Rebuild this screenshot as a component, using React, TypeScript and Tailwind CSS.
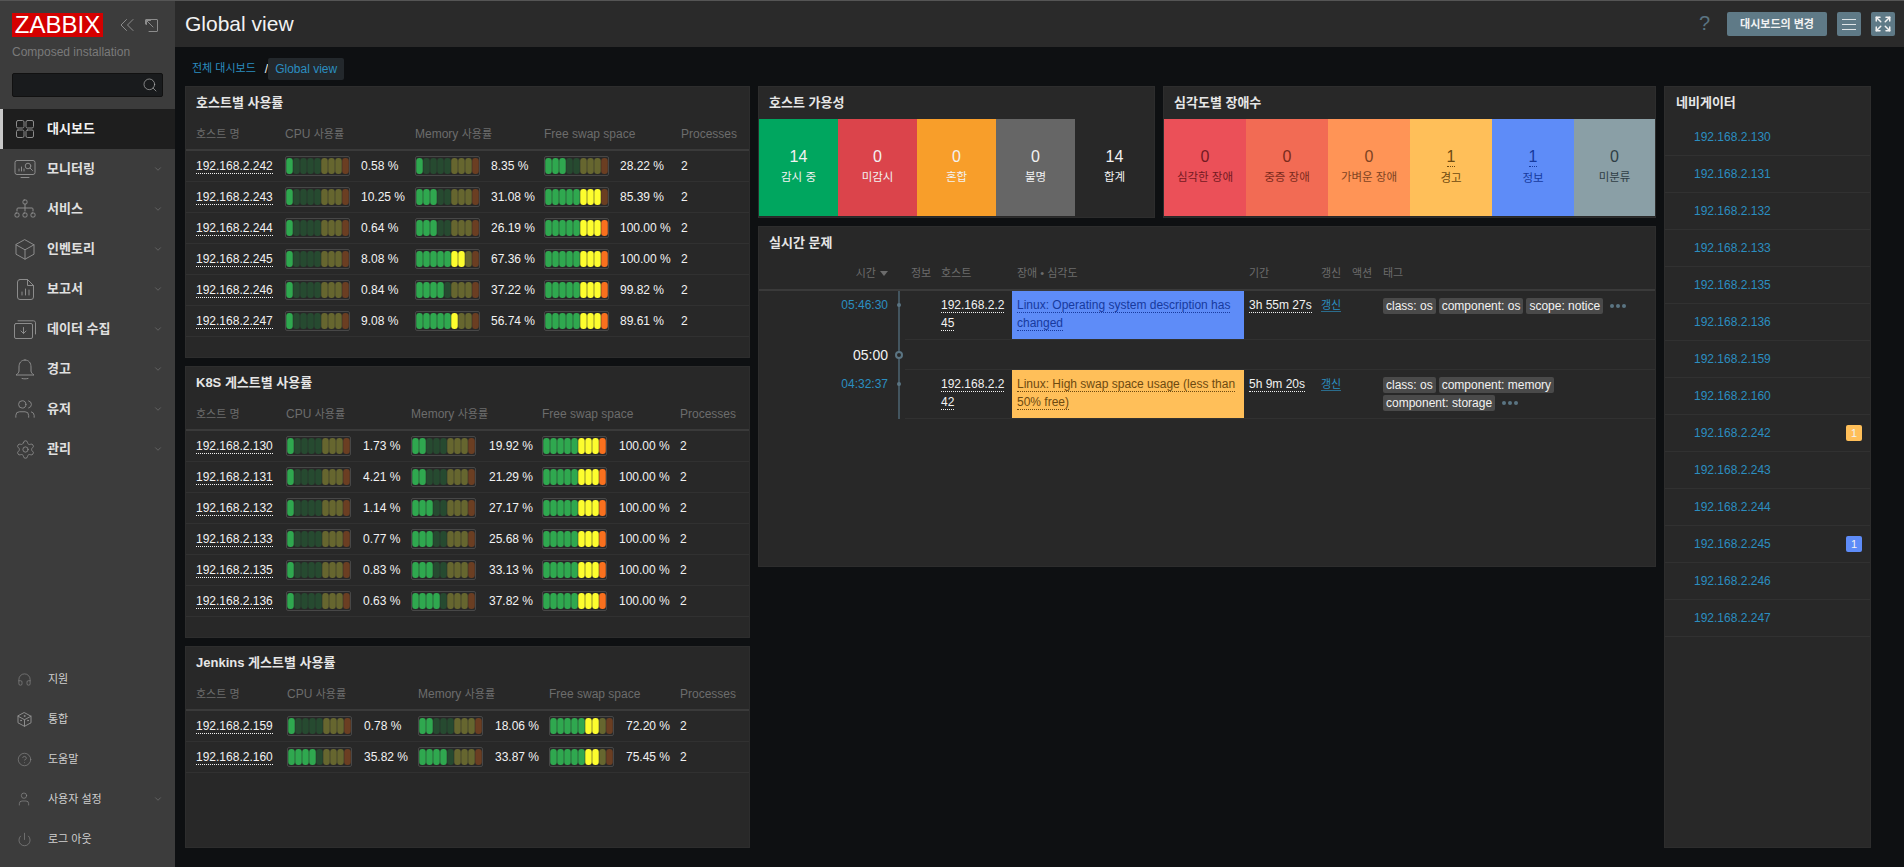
import React from "react";
import { Search, ChevronDown, Users, Settings, Headphones, CircleHelp, User, Power, Expand } from "lucide-react";

const ICON = { fill: "none", stroke: "#8c8c8c", strokeWidth: 1, strokeLinecap: "round" as const, strokeLinejoin: "round" as const };

const DashIcon = () => (
  <svg width="18" height="18" viewBox="0 0 18 18" {...ICON}>
    <rect x="0.5" y="0.5" width="7.5" height="7.5" rx="1.5" /><rect x="10" y="0.5" width="7.5" height="7.5" rx="1.5" />
    <rect x="0.5" y="10" width="7.5" height="7.5" rx="1.5" /><rect x="10" y="10" width="7.5" height="7.5" rx="1.5" />
  </svg>
);
const MonitorIcon = () => (
  <svg width="22" height="18" viewBox="0 0 22 18" {...ICON}>
    <path d="M13 .5H3a2 2 0 0 0-2 2v10a2 2 0 0 0 2 2h16a2 2 0 0 0 2-2V2.5a2 2 0 0 0-2-2h-6zM7 17.5h8M5 11V9M7.5 11V7M10 11V9" />
    <circle cx="14" cy="6" r="2.8" /><path d="M16 8l2.5 2.5" />
  </svg>
);
const ServiceIcon = () => (
  <svg width="22" height="20" viewBox="0 0 22 20" {...ICON}>
    <rect x="9" y="1" width="4" height="4" rx="1.2" /><path d="M11 5v7M3 12V10a1 1 0 0 1 1-1h14a1 1 0 0 1 1 1v2" />
    <rect x="1" y="14" width="4" height="4" rx="1.2" /><rect x="9" y="14" width="4" height="4" rx="1.2" /><rect x="17" y="14" width="4" height="4" rx="1.2" />
  </svg>
);
const BoxIcon = () => (
  <svg width="20" height="21" viewBox="0 0 20 21" {...ICON}>
    <path d="M10 .8l9 5v9.4l-9 5-9-5V5.800zM1 5.800l9 5 9-5M10 10.800v9.400" />
  </svg>
);
const ReportIcon = () => (
  <svg width="17" height="21" viewBox="0 0 17 21" {...ICON}>
    <path d="M3 .5h7.500l6 6v11.500a2.500 2.500 0 0 1-2.500 2.500H3A2.500 2.500 0 0 1 .5 18V3A2.500 2.500 0 0 1 3 .5zM10.500.5v6h6M5 16v-3M8.500 16V10M12 16v-5" />
  </svg>
);
const DataIcon = () => (
  <svg width="22" height="19" viewBox="0 0 22 19" {...ICON}>
    <path d="M4 .8h15.500a2 2 0 0 1 2 2V14" />
    <rect x=".5" y="3.500" width="18" height="15" rx="1.500" />
    <path d="M9.500 7.500v6M7 11l2.500 2.500L12 11" />
  </svg>
);
const BellIcon = () => (
  <svg width="20" height="21" viewBox="0 0 20 21" {...ICON}>
    <path d="M10 1C6 1 4 4 4 8v4c0 1.500-1.500 3-3 4h18c-1.500-1-3-2.500-3-4V8c0-4-2-7-6-7zM7 19.500c1.500.5 4.500.5 6 0" />
  </svg>
);
const CubeIcon = () => (
  <svg width="15" height="15" viewBox="0 0 15 15" {...ICON}>
    <path d="M7.500.7l6.500 3.500v6.600l-6.500 3.500L1 10.800V4.200zM1 4.200l6.500 3.500L14 4.200M7.500 7.700v6.600" />
    <circle cx="7.500" cy="4" r=".5" /><circle cx="4" cy="8.500" r=".5" /><circle cx="11" cy="8.500" r=".5" />
  </svg>
);
const PopoutIcon = () => (
  <svg width="13" height="13" viewBox="0 0 13 13" {...ICON}>
    <path d="M.5 5V1A.5.5 0 0 1 1 .5h11a.5.5 0 0 1 .5.5v11a.5.5 0 0 1-.5.5H4M1.500 1.500L8 8M1.500 5.500v-4h4" />
  </svg>
);
const DoubleLeft = () => (
  <svg width="14" height="12" viewBox="0 0 14 12" {...ICON}>
    <path d="M6.500.5L1 6l5.500 5.500M13 .5L7.500 6l5.500 5.500" />
  </svg>
);

const mainNav: [string, React.ReactNode][] = [
  ["모니터링", <MonitorIcon />],
  ["서비스", <ServiceIcon />],
  ["인벤토리", <BoxIcon />],
  ["보고서", <ReportIcon />],
  ["데이터 수집", <DataIcon />],
  ["경고", <BellIcon />],
  ["유저", <Users size={22} strokeWidth={1} color="#8c8c8c" />],
  ["관리", <Settings size={21} strokeWidth={1} color="#8c8c8c" />],
];
const bottomNav: [string, React.ReactNode, boolean][] = [
  ["지원", <Headphones size={15} strokeWidth={1} color="#8c8c8c" />, false],
  ["통합", <CubeIcon />, false],
  ["도움말", <CircleHelp size={15} strokeWidth={1} color="#8c8c8c" />, false],
  ["사용자 설정", <User size={16} strokeWidth={1} color="#8c8c8c" />, true],
  ["로그 아웃", <Power size={15} strokeWidth={1} color="#8c8c8c" />, false],
];

function Sidebar() {
  return (
    <aside className="w-[175px] shrink-0 bg-[#3c3c3c] flex flex-col justify-between">
      <div>
        <div className="flex items-center pl-[12px] pt-[12px] h-[36px]">
          <div className="w-[91px] h-[24px] bg-[#d40000] text-white text-[24px] leading-[24px] text-center">ZABBIX</div>
          <div className="ml-[17px] flex items-center"><DoubleLeft /></div>
          <div className="ml-[11px] flex items-center"><PopoutIcon /></div>
        </div>
        <div className="pl-[12px] mt-[7px] text-[12px] leading-[16px] text-[#7a7a7a]">Composed installation</div>
        <div className="mx-[12px] mt-[13px] h-[24px] w-[151px] bg-[#191b1d] border border-[#111] rounded-[2px] flex items-center justify-end pr-[4px]">
          <Search size={16} strokeWidth={1} color="#b5b5b5" />
        </div>
        <div className="mt-[12px]">
          <div className="h-[40px] flex items-center bg-[#1e1e1e] border-l-[3px] border-[#c8c8c8]">
            <div className="w-[44px] pl-[13px]"><DashIcon /></div>
            <span className="text-[13px] font-bold text-[#f2f2f2]">대시보드</span>
          </div>
          {mainNav.map(([label, icon]) => (
            <div key={label} className="h-[40px] flex items-center relative">
              <div className="w-[47px] flex justify-center pl-[3px]">{icon}</div>
              <span className="text-[13px] font-bold text-[#e0e0e0]">{label}</span>
              <div className="ml-auto mr-[12px]"><ChevronDown size={10} strokeWidth={1} color="#9a9a9a" /></div>
            </div>
          ))}
        </div>
      </div>
      <div className="pb-[8px]">
        {bottomNav.map(([label, icon, chev]) => (
          <div key={label} className="h-[40px] flex items-center">
            <div className="w-[48px] flex justify-center">{icon}</div>
            <span className="text-[11px] text-[#cfcfcf]">{label}</span>
            {chev && <div className="ml-auto mr-[12px]"><ChevronDown size={10} strokeWidth={1} color="#9a9a9a" /></div>}
          </div>
        ))}
      </div>
    </aside>
  );
}

function Gauge({ value }: { value: number }) {
  const n = Math.ceil((value / 100) * 9);
  const segs = [0, 1, 2, 3, 4, 5, 6, 7, 8];
  return (
    <div className="w-[65px] h-[20px] border border-[#474747] rounded-[2px] flex items-center">
      <svg width="63" height="16" viewBox="0 0 63 16">
        {segs.map((i) => {
          const on = i < n;
          const fill = i < 5 ? (on ? "#2fa84f" : "#264a30") : i < 8 ? (on ? "#fdfd2e" : "#66662f") : on ? "#f9701e" : "#6b3e22";
          return <rect key={i} x={i * 7 + 0.25} y="0" width="6.5" height="16" rx="3" fill={fill} />;
        })}
      </svg>
    </div>
  );
}

type Row = [string, number, number, number];

function UsagePanel({ title, rows, cols, tall }: { title: React.ReactNode; rows: Row[]; cols: string; tall: string }) {
  return (
    <section className={`bg-[#282828] border border-[#2d2d2d] ${tall}`}>
      <h2 className="h-[32px] flex items-center pl-[10px] text-[13px] font-bold text-[#e6e6e6]">{title}</h2>
      <div className={`grid ${cols} pl-[10px] h-[32px] items-center border-b-2 border-[#3a3a3a] text-[12px] text-[#6c6c6c]`}>
        <span className="text-[11px]">호스트 명</span>
        <span className="col-span-2">CPU <span className="text-[11px]">사용률</span></span>
        <span className="col-span-2">Memory <span className="text-[11px]">사용률</span></span>
        <span className="col-span-2">Free swap space</span>
        <span>Processes</span>
      </div>
      {rows.map(([host, cpu, mem, swap]) => (
        <div key={host} className={`grid ${cols} pl-[10px] h-[31px] items-center border-b border-[#313131] text-[12px] text-[#f2f2f2]`}>
          <span><span className="border-b border-dotted border-[#f2f2f2]">{host}</span></span>
          <Gauge value={cpu} />
          <span>{cpu.toFixed(2)} %</span>
          <Gauge value={mem} />
          <span>{mem.toFixed(2)} %</span>
          <Gauge value={swap} />
          <span>{swap.toFixed(2)} %</span>
          <span>2</span>
        </div>
      ))}
    </section>
  );
}

function Stat({ num, label, cls, under, lineCls, size = "flex-1" }: { num: number; label: string; cls: string; under?: boolean; lineCls?: string; size?: string }) {
  return (
    <div className={`${size} flex flex-col items-center justify-center pb-[2px] ${cls}`}>
      <span className={`text-[16px] leading-[18px] ${under ? `border-b border-dotted ${lineCls}` : ""}`}>{num}</span>
      <span className="text-[11.5px] leading-[16px] mt-[3px]">{label}</span>
    </div>
  );
}

function Tag({ children }: { children: React.ReactNode }) {
  return <span className="h-[16px] leading-[16px] px-[3px] rounded-[2px] bg-[#4a4a4a] text-[12px] text-[#f2f2f2]">{children}</span>;
}
function Dots() {
  return (
    <span className="h-[16px] flex items-center gap-[2px] ml-[4px]">
      <i className="w-[4px] h-[4px] rounded-full bg-[#5a7482]" /><i className="w-[4px] h-[4px] rounded-full bg-[#5a7482]" /><i className="w-[4px] h-[4px] rounded-full bg-[#5a7482]" />
    </span>
  );
}

function Timeline({ kind }: { kind: "dot" | "ring" }) {
  return (
    <div className="w-[12px] shrink-0 relative flex justify-center">
      <div className="w-[2px] bg-[#43555f]" />
      {kind === "dot" ? (
        <div className="absolute top-[12px] left-[4px] w-[4px] h-[4px] rounded-full bg-[#5a7482]" />
      ) : (
        <div className="absolute top-[11px] left-[2px] w-[8px] h-[8px] rounded-full border-2 border-[#5a7482] bg-[#282828]" />
      )}
    </div>
  );
}

const probCols = "grid-cols-[36px_71px_232px_77px_31px_31px_1fr]";

function ProblemRow(props: { time: string; h1: string; h2: string; text: React.ReactNode; bg: string; line: string; dur: string; tags: React.ReactNode }) {
  return (
    <div className="flex h-[49px]">
      <div className="w-[134px] shrink-0 text-right pr-[5px] pt-[5px] text-[12px] leading-[18px] text-[#2b8ec0]">{props.time}</div>
      <Timeline kind="dot" />
      <div className={`flex-1 grid ${probCols} border-b border-[#313131] text-[12px] leading-[18px] text-[#f2f2f2]`}>
        <div />
        <div className="pt-[5px]"><span className="border-b border-dotted border-[#f2f2f2]">{props.h1}<br />{props.h2}</span></div>
        <div className={`${props.bg} px-[5px] pt-[5px]`}><span className={`border-b border-dotted ${props.line}`}>{props.text}</span></div>
        <div className="pl-[5px] pt-[5px]"><span className="border-b border-dotted border-[#f2f2f2]">{props.dur}</span></div>
        <div className="pt-[5px] text-[#2b8ec0] text-[11px]"><span className="border-b border-[#2b6c8c]">갱신</span></div>
        <div />
        <div className="pt-[7px] flex flex-wrap content-start gap-x-[3px] gap-y-[2px] pr-[4px]">{props.tags}</div>
      </div>
    </div>
  );
}

function ProblemsPanel() {
  return (
    <section className="h-[341px] bg-[#282828] border border-[#2d2d2d]">
      <h2 className="h-[31px] flex items-center pl-[10px] text-[13px] font-bold text-[#e6e6e6]">실시간 문제</h2>
      <div className="flex h-[33px] items-center border-b-2 border-[#3a3a3a] text-[11px] text-[#6c6c6c]">
        <div className="w-[134px] pr-[5px] flex justify-end items-center gap-[4px]">시간<span className="w-0 h-0 border-x-[4px] border-x-transparent border-t-[5px] border-t-[#6c6c6c]" /></div>
        <div className="w-[12px]" />
        <div className={`flex-1 grid ${probCols}`}>
          <span className="pl-[6px]">정보</span>
          <span>호스트</span>
          <span className="pl-[5px]">장애 • 심각도</span>
          <span className="pl-[5px]">기간</span>
          <span>갱신</span>
          <span>액션</span>
          <span>태그</span>
        </div>
      </div>
      <ProblemRow time="05:46:30" h1="192.168.2.2" h2="45" bg="bg-[#5e8cf8]" line="border-[#173a9e] text-[#173a9e]"
        text="Linux: Operating system description has changed" dur="3h 55m 27s"
        tags={<><Tag>class: os</Tag><Tag>component: os</Tag><Tag>scope: notice</Tag><Dots /></>} />
      <div className="flex h-[30px]">
        <div className="w-[134px] shrink-0 text-right pr-[5px] text-[14px] leading-[30px] text-[#f2f2f2]">05:00</div>
        <Timeline kind="ring" />
        <div className="flex-1 border-b border-[#313131]" />
      </div>
      <ProblemRow time="04:32:37" h1="192.168.2.2" h2="42" bg="bg-[#ffbf59]" line="border-[#6e4a10] text-[#6e4a10]"
        text="Linux: High swap space usage (less than 50% free)" dur="5h 9m 20s"
        tags={<><Tag>class: os</Tag><Tag>component: memory</Tag><Tag>component: storage</Tag><Dots /></>} />
    </section>
  );
}

const navHosts: [string, null | "w" | "i"][] = [
  ["192.168.2.130", null], ["192.168.2.131", null], ["192.168.2.132", null], ["192.168.2.133", null], ["192.168.2.135", null],
  ["192.168.2.136", null], ["192.168.2.159", null], ["192.168.2.160", null], ["192.168.2.242", "w"], ["192.168.2.243", null],
  ["192.168.2.244", null], ["192.168.2.245", "i"], ["192.168.2.246", null], ["192.168.2.247", null],
];

export default function App() {
  return (
    <div className="h-[867px] w-[1904px] overflow-hidden flex bg-[#0e1012] border-t border-[#555] font-['Liberation_Sans','Noto_Sans_CJK_KR',sans-serif]">
      <Sidebar />
      <main className="flex-1 min-w-0">
        <header className="h-[46px] bg-[#2a2a2a] flex items-center pl-[10px] pr-[9px]">
          <h1 className="text-[21px] text-[#f2f2f2]">Global view</h1>
          <span className="ml-auto mr-[17px] mb-[2px] text-[20px] text-[#5a7482]">?</span>
          <button className="w-[100px] h-[24px] bg-[#5f7a87] rounded-[2px] text-[11px] font-bold text-[#f2f2f2]">대시보드의 변경</button>
          <button className="w-[24px] h-[24px] ml-[10px] bg-[#5f7a87] rounded-[2px] flex flex-col items-center justify-center gap-[4px]">
            <i className="w-[14px] h-px bg-[#dfe5e8]" /><i className="w-[14px] h-px bg-[#dfe5e8]" /><i className="w-[14px] h-px bg-[#dfe5e8]" />
          </button>
          <button className="w-[24px] h-[24px] ml-[10px] bg-[#5f7a87] rounded-[2px] flex items-center justify-center">
            <Expand size={18} strokeWidth={2} color="#f2f2f2" />
          </button>
        </header>
        <div className="h-[39px] pl-[17px] pt-[4px] flex items-center text-[11px] text-[#2b8ec0]">
          <span>전체 대시보드</span>
          <span className="ml-[9px] text-[12px] text-[#f2f2f2]">/</span>
          <span className="h-[22px] px-[7px] leading-[22px] bg-[#23282c] rounded-[2px] text-[12px]">Global view</span>
        </div>
        <div className="pl-[10px] flex gap-[8px] items-start">
          <div className="w-[565px] flex flex-col gap-[8px]">
            <UsagePanel title="호스트별 사용률" tall="h-[272px]" cols="grid-cols-[89px_76px_54px_76px_53px_76px_61px_1fr]" rows={[
              ["192.168.2.242", 0.58, 8.35, 28.22],
              ["192.168.2.243", 10.25, 31.08, 85.39],
              ["192.168.2.244", 0.64, 26.19, 100],
              ["192.168.2.245", 8.08, 67.36, 100],
              ["192.168.2.246", 0.84, 37.22, 99.82],
              ["192.168.2.247", 9.08, 56.74, 89.61],
            ]} />
            <UsagePanel title="K8S 게스트별 사용률" tall="h-[272px]" cols="grid-cols-[90px_77px_48px_78px_53px_77px_61px_1fr]" rows={[
              ["192.168.2.130", 1.73, 19.92, 100],
              ["192.168.2.131", 4.21, 21.29, 100],
              ["192.168.2.132", 1.14, 27.17, 100],
              ["192.168.2.133", 0.77, 25.68, 100],
              ["192.168.2.135", 0.83, 33.13, 100],
              ["192.168.2.136", 0.63, 37.82, 100],
            ]} />
            <UsagePanel title="Jenkins 게스트별 사용률" tall="h-[202px]" cols="grid-cols-[91px_77px_54px_77px_54px_77px_54px_1fr]" rows={[
              ["192.168.2.159", 0.78, 18.06, 72.2],
              ["192.168.2.160", 35.82, 33.87, 75.45],
            ]} />
          </div>
          <div className="w-[898px] flex flex-col gap-[8px]">
            <div className="flex gap-[8px]">
              <section className="w-[397px] h-[132px] bg-[#282828] border border-[#2d2d2d] flex flex-col">
                <h2 className="h-[32px] shrink-0 flex items-center pl-[10px] text-[13px] font-bold text-[#e6e6e6]">호스트 가용성</h2>
                <div className="flex-1 flex text-[#f2f2f2] mb-[1px]">
                  <Stat num={14} label="감시 중" cls="bg-[#00a65f]" />
                  <Stat num={0} label="미감시" cls="bg-[#db444b]" />
                  <Stat num={0} label="혼합" cls="bg-[#f89e2a]" />
                  <Stat num={0} label="불명" cls="bg-[#666666]" />
                  <Stat num={14} label="합계" cls="" />
                </div>
              </section>
              <section className="w-[493px] h-[132px] bg-[#282828] border border-[#2d2d2d] flex flex-col">
                <h2 className="h-[32px] shrink-0 flex items-center pl-[10px] text-[13px] font-bold text-[#e6e6e6]">심각도별 장애수</h2>
                <div className="flex-1 flex mb-[1px]">
                  <Stat size="w-[82px]" num={0} label="심각한 장애" cls="bg-[#eb5058] text-[#741a22]" />
                  <Stat size="w-[82px]" num={0} label="중증 장애" cls="bg-[#f26b54] text-[#7a2a1c]" />
                  <Stat size="w-[82px]" num={0} label="가벼운 장애" cls="bg-[#ff9456] text-[#7e4322]" />
                  <Stat size="w-[82px]" num={1} label="경고" cls="bg-[#ffbf59] text-[#6e4a10]" under lineCls="border-[#6e4a10]" />
                  <Stat size="w-[82px]" num={1} label="정보" cls="bg-[#5e8cf8] text-[#173a9e]" under lineCls="border-[#173a9e]" />
                  <Stat num={0} label="미분류" cls="bg-[#8a9fa6] text-[#2f3e45]" />
                </div>
              </section>
            </div>
            <ProblemsPanel />
          </div>
          <section className="w-[207px] h-[762px] bg-[#282828] border border-[#2d2d2d]">
            <h2 className="h-[32px] flex items-center pl-[11px] text-[13px] font-bold text-[#e6e6e6]">네비게이터</h2>
            {navHosts.map(([host, badge]) => (
              <div key={host} className="h-[37px] flex items-center pl-[29px] pr-[8px] border-b border-[#313131] text-[12px] text-[#2b8ec0]">
                <span>{host}</span>
                {badge && (
                  <span className={`ml-auto w-[16px] h-[16px] rounded-[2px] text-center text-[11px] leading-[16px] text-[#f2f2f2] ${badge === "w" ? "bg-[#ffbf59]" : "bg-[#5e8cf8]"}`}>1</span>
                )}
              </div>
            ))}
          </section>
        </div>
      </main>
    </div>
  );
}
